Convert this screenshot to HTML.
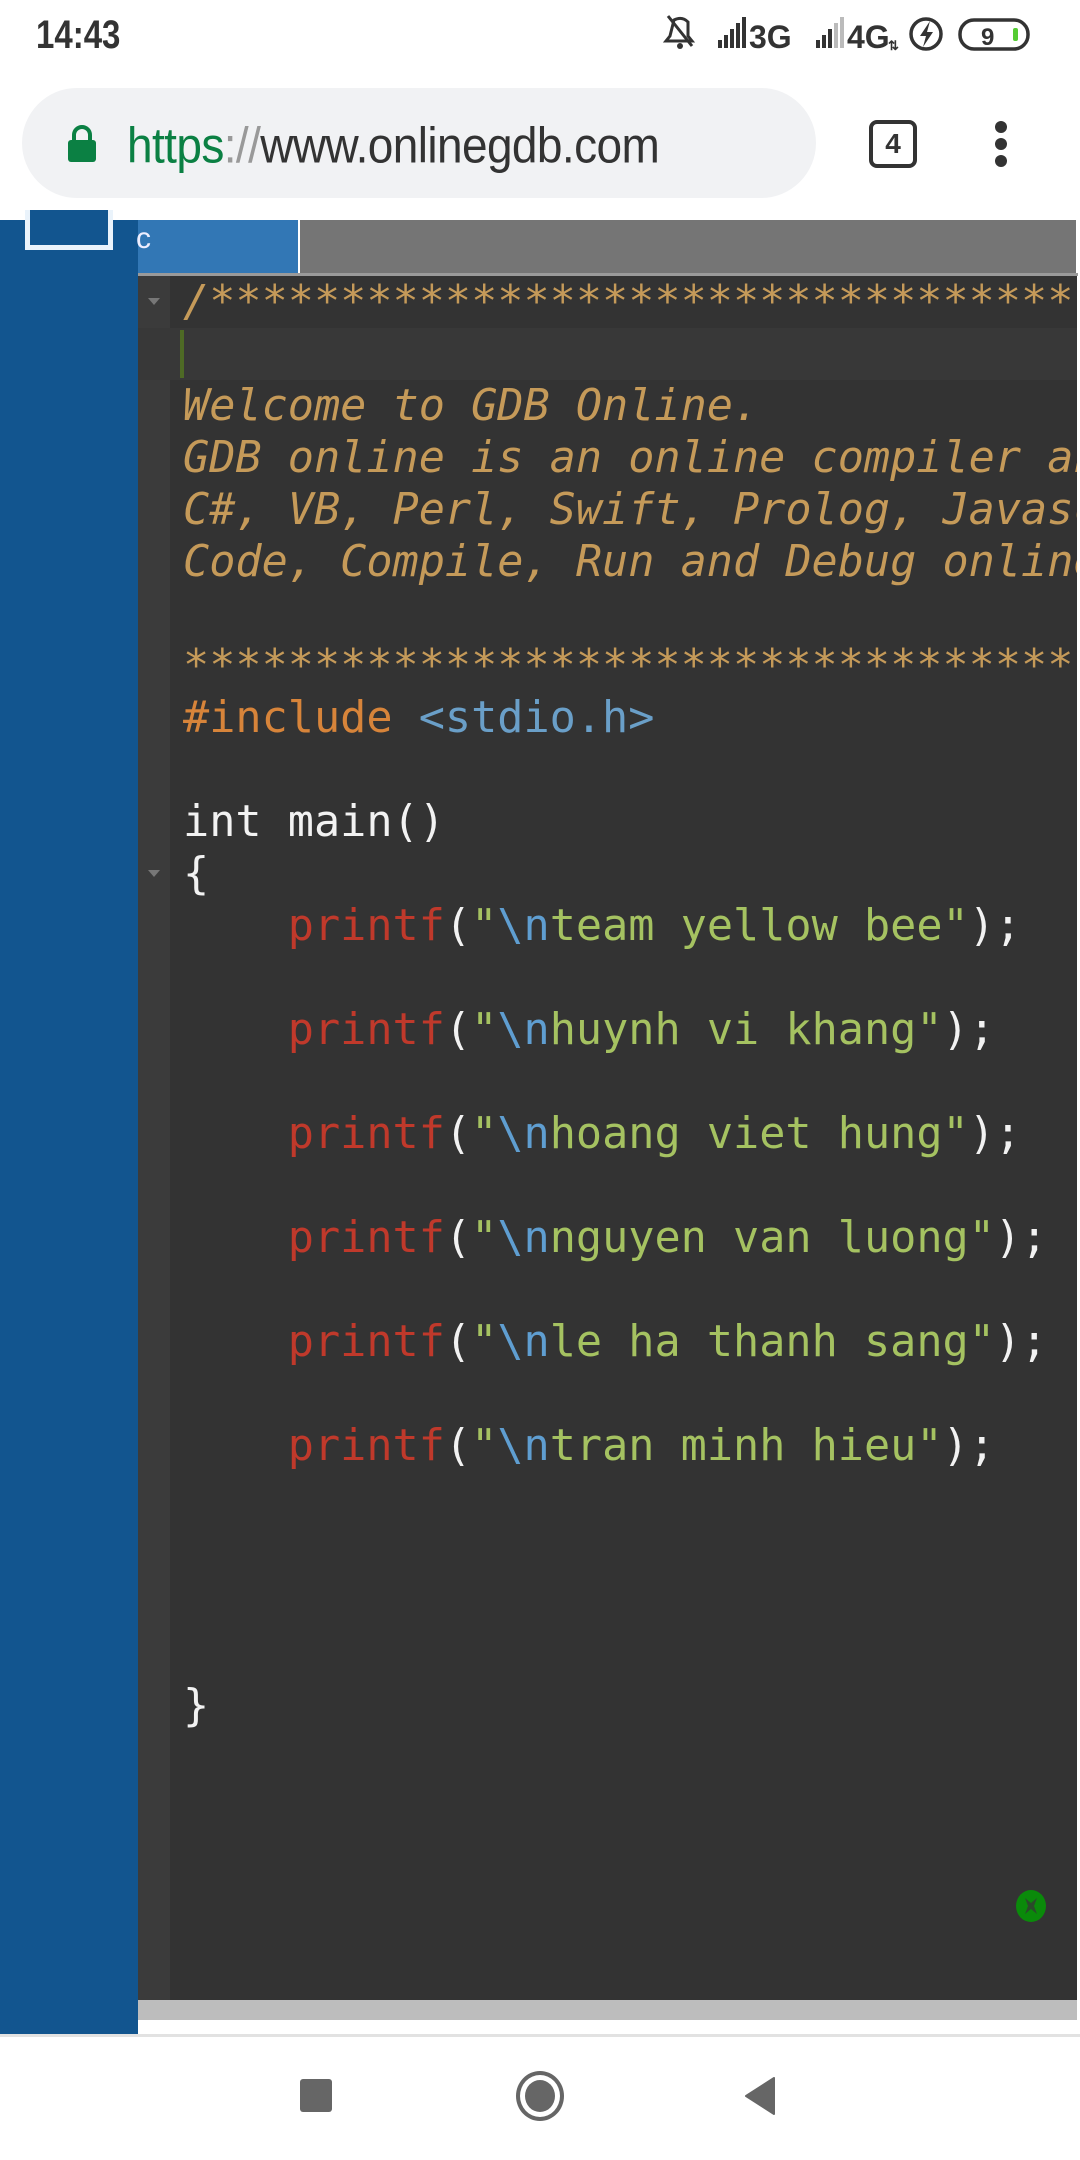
<!DOCTYPE html>
<html><head><meta charset="utf-8">
<style>
*{margin:0;padding:0;box-sizing:border-box}
html,body{width:1080px;height:2160px;overflow:hidden;background:#fff;font-family:"Liberation Sans",sans-serif;position:relative}
.abs{position:absolute}
#status{left:0;top:0;width:1080px;height:68px}
#time{left:36px;top:12px;font-size:33px;font-weight:bold;color:#333;transform:scaleY(1.2);transform-origin:left top}
#pill{left:22px;top:88px;width:794px;height:110px;border-radius:55px;background:#f1f2f4}
#url{left:127px;top:116px;font-size:46px;color:#333;letter-spacing:-0.6px;transform:scaleY(1.08);transform-origin:left top}
#side{left:0;top:220px;width:138px;height:1816px;background:#12558f}
#tab{left:138px;top:220px;width:160px;height:53px;background:#3277b5}
#tabg{left:300px;top:220px;width:776px;height:53px;background:#757575}
#tabline{left:138px;top:273px;width:940px;height:3px;background:#9a9a9a}
#ed{left:138px;top:276px;width:939px;height:1724px;background:#333;overflow:hidden}
#gut{left:0;top:0;width:32px;height:1724px;background:#3b3b3b}
#act{left:32px;top:52px;width:907px;height:52px;background:#383838}
#cur{left:42px;top:54px;width:4px;height:48px;background:#4e6a25}
#code{left:45px;top:0;font-family:"DejaVu Sans Mono","Liberation Mono",monospace;font-size:43.5px;line-height:52px;white-space:pre;color:#f2f2f2}
.c{color:#c59a59;font-style:italic}
.o{color:#d7843a}.b{color:#6a9fc8}.r{color:#c0392b}.g{color:#a5c261}.e{color:#5f9ed1}
.fold{width:0;height:0;border-left:6px solid transparent;border-right:6px solid transparent;border-top:7px solid #777}
#bar{left:138px;top:2000px;width:939px;height:20px;background:#bdbdbd}
#strip{left:141px;top:2020px;width:934px;height:14px;background:#fff}
#navline{left:0;top:2034px;width:1080px;height:3px;background:#e2e2e2}
</style></head><body>
<div id="status" class="abs"></div>
<div id="time" class="abs">14:43</div>
<svg class="abs" style="left:660px;top:10px" width="420" height="48" viewBox="0 0 420 44">
 <g fill="#333">
  <path d="M14 8 q8-4 14 2 l0 14 l4 5 h-26 l4-5z" fill="none" stroke="#333" stroke-width="3"/>
  <line x1="8" y1="4" x2="32" y2="34" stroke="#333" stroke-width="3"/>
  <circle cx="20" cy="34" r="3"/>
  <rect x="58" y="28" width="4" height="8"/><rect x="64" y="23" width="4" height="13"/><rect x="70" y="17" width="4" height="19"/><rect x="76" y="11" width="4" height="25"/><rect x="82" y="5" width="4" height="31"/>
  <text x="89" y="36" font-size="32" font-weight="bold" font-family="Liberation Sans">3G</text>
  <rect x="156" y="28" width="4" height="8"/><rect x="162" y="23" width="4" height="13"/><rect x="168" y="17" width="4" height="19"/><rect x="174" y="11" width="4" height="25" fill="#bbb"/><rect x="180" y="5" width="4" height="31" fill="#bbb"/>
  <text x="187" y="36" font-size="32" font-weight="bold" font-family="Liberation Sans">4G</text>
  <text x="228" y="38" font-size="13" font-weight="bold">⇅</text>
  <circle cx="266" cy="22" r="15" fill="none" stroke="#333" stroke-width="3.5"/>
  <path d="M270 9 l-10 15 h6 l-3 11 l10-15 h-6z"/>
  <rect x="300" y="8" width="68" height="29" rx="14" fill="none" stroke="#333" stroke-width="3.5"/>
  <text x="321" y="33" font-size="24" font-weight="bold" font-family="Liberation Sans">9</text>
  <rect x="353" y="16" width="5" height="13" rx="2" fill="#5c3"/>
 </g>
</svg>
<div id="pill" class="abs"></div>
<svg class="abs" style="left:66px;top:124px" width="32" height="40" viewBox="0 0 32 40">
 <path d="M8 16 v-5 a8 8 0 0 1 16 0 v5" fill="none" stroke="#0b8043" stroke-width="4"/>
 <rect x="2" y="16" width="28" height="22" rx="3" fill="#0b8043"/>
</svg>
<div id="url" class="abs"><span style="color:#0b8043">https</span><span style="color:#999">://</span>www.onlinegdb.com</div>
<div class="abs" style="left:869px;top:120px;width:48px;height:48px;border:4px solid #333;border-radius:8px;font-size:28px;font-weight:bold;color:#333;text-align:center;line-height:40px">4</div>
<div class="abs" style="left:995px;top:121px;width:12px;height:12px;border-radius:6px;background:#333"></div>
<div class="abs" style="left:995px;top:138px;width:12px;height:12px;border-radius:6px;background:#333"></div>
<div class="abs" style="left:995px;top:155px;width:12px;height:12px;border-radius:6px;background:#333"></div>

<div id="side" class="abs"></div>
<div class="abs" style="left:25px;top:210px;width:88px;height:40px;border:5px solid #eaf3fb;border-top:none;background:#12558f"></div>
<div id="tab" class="abs"></div>
<div class="abs" style="left:136px;top:222px;font-size:30px;color:#eef">c</div>
<div id="tabg" class="abs"></div>
<div id="tabline" class="abs"></div>
<div id="ed" class="abs">
 <div id="gut" class="abs"></div>
 <div id="act" class="abs"></div>
 <div class="abs" style="left:0;top:52px;width:32px;height:52px;background:#383838"></div>
 <div id="cur" class="abs"></div>
 <div class="abs fold" style="left:10px;top:22px"></div>
 <div class="abs fold" style="left:10px;top:594px"></div>
<div id="code" class="abs"><span class="c">/****************************************************</span>

<span class="c">Welcome to GDB Online.</span>
<span class="c">GDB online is an online compiler and debugger tool</span>
<span class="c">C#, VB, Perl, Swift, Prolog, Javascript, Pascal</span>
<span class="c">Code, Compile, Run and Debug online from anywhere</span>

<span class="c">****************************************************</span>
<span class="o">#include</span> <span class="b">&lt;stdio.h&gt;</span>

int main()
{
    <span class="r">printf</span>(<span class="g">"</span><span class="e">\n</span><span class="g">team yellow bee"</span>);

    <span class="r">printf</span>(<span class="g">"</span><span class="e">\n</span><span class="g">huynh vi khang"</span>);

    <span class="r">printf</span>(<span class="g">"</span><span class="e">\n</span><span class="g">hoang viet hung"</span>);

    <span class="r">printf</span>(<span class="g">"</span><span class="e">\n</span><span class="g">nguyen van luong"</span>);

    <span class="r">printf</span>(<span class="g">"</span><span class="e">\n</span><span class="g">le ha thanh sang"</span>);

    <span class="r">printf</span>(<span class="g">"</span><span class="e">\n</span><span class="g">tran minh hieu"</span>);




}
</div>
 <svg class="abs" style="left:877px;top:1613px" width="32" height="34" viewBox="0 0 32 34">
  <ellipse cx="16" cy="17" rx="15" ry="16" fill="#0a8a0a"/>
  <path d="M10 9 l6 5 l6-5 l-3 8 l3 8 l-6-5 l-6 5 l3-8z" fill="#2a4a2a"/>
 </svg>
</div>
<div id="bar" class="abs"></div>
<div id="strip" class="abs"></div>
<div id="navline" class="abs"></div>
<div class="abs" style="left:300px;top:2079px;width:32px;height:33px;border-radius:3px;background:#666"></div>
<div class="abs" style="left:516px;top:2071px;width:48px;height:50px;border-radius:50%;border:4px solid #666"></div>
<div class="abs" style="left:525px;top:2080px;width:30px;height:32px;border-radius:50%;background:#666"></div>
<svg class="abs" style="left:744px;top:2077px" width="32" height="38" viewBox="0 0 32 38"><path d="M30 1 V37 L2 19 Z" fill="#666" stroke="#666" stroke-linejoin="round" stroke-width="2"/></svg>
</body></html>
